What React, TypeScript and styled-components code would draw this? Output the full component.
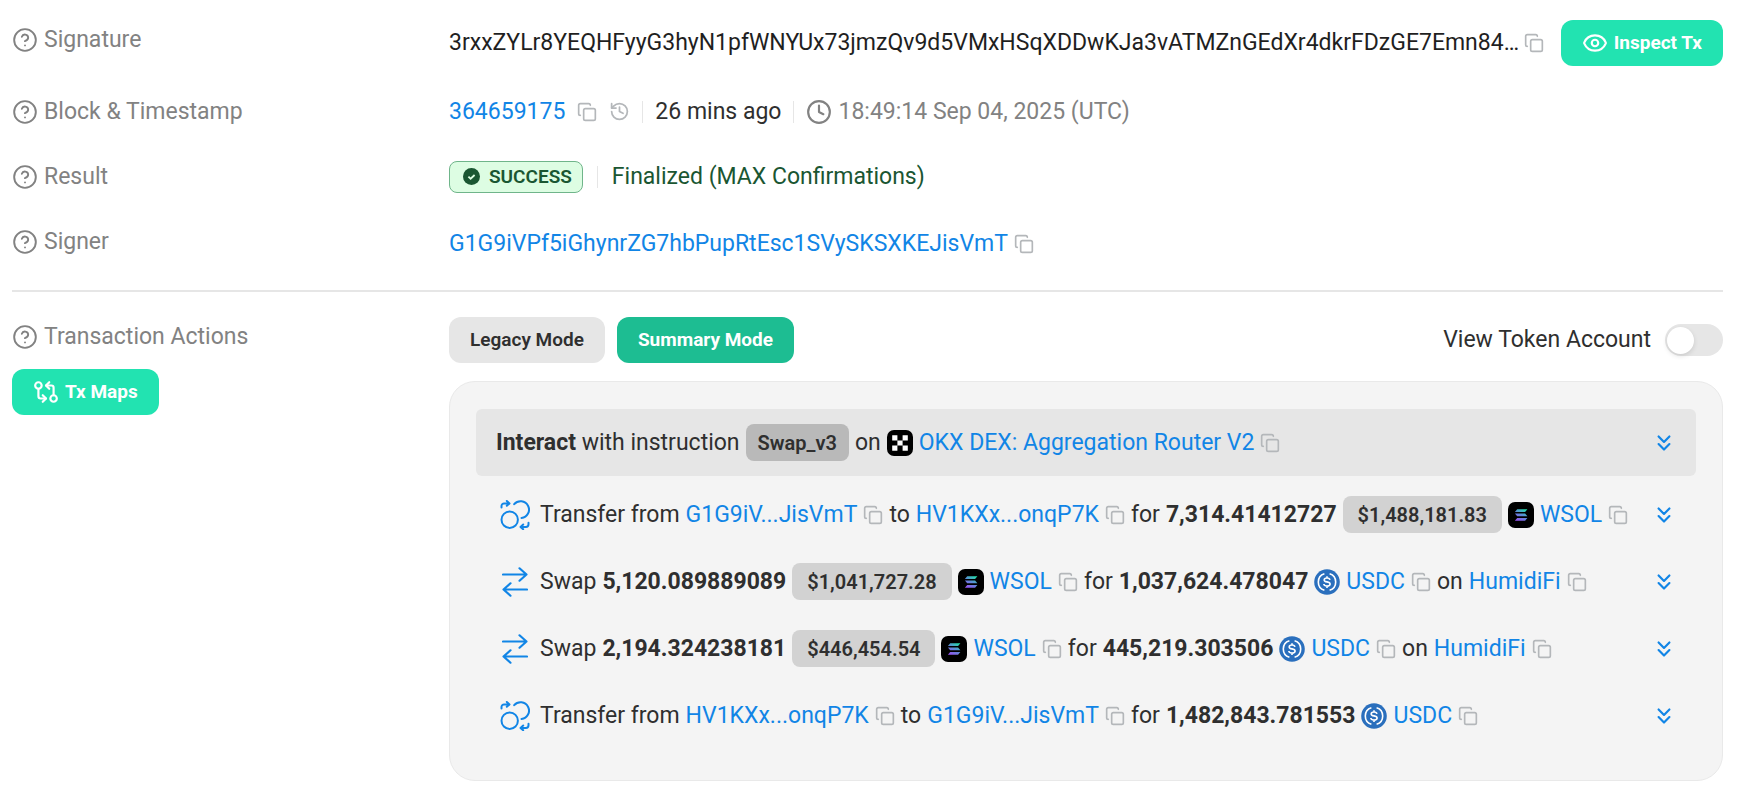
import React from "react";
import styled, { createGlobalStyle } from "styled-components";
import {
  ChevronsDown,
  CircleHelp,
  Clock,
  Copy,
  Eye,
  GitCompareArrows,
  History,
} from "lucide-react";

const color = {
  text: "#2f2f2f",
  muted: "#828282",
  link: "#1185e6",
  faint: "#b4b7ba",
  line: "#e6e6e6",
  mint: "#22e3b1",
  green: "#1dbd92",
  success: "#1a5632",
};

const GlobalStyle = createGlobalStyle`
  * { box-sizing: border-box; }
  body {
    margin: 0;
    background: #ffffff;
    color: ${color.text};
    font-family: Roboto, "Liberation Sans", sans-serif;
    font-size: 23px;
    line-height: 30px;
  }
  button, input { font: inherit; }
  svg { flex: none; display: block; }
`;

const Page = styled.main`
  padding: 20px 21px 20px 12px;
`;

const Fields = styled.dl`
  margin: 0;
  padding-bottom: 16px;
  border-bottom: 2px solid ${color.line};
`;

const Field = styled.div<{ $top?: boolean }>`
  display: grid;
  grid-template-columns: 437px minmax(0, 1fr);
  align-items: ${(p) => (p.$top ? "start" : "center")};
  min-height: ${(p) => (p.$top ? 59 : 65)}px;
`;

const Label = styled.dt`
  display: flex;
  align-items: center;
  gap: 6px;
  height: 40px;
  color: ${color.muted};
`;

const Value = styled.dd<{ $gap?: number }>`
  display: flex;
  align-items: center;
  gap: ${(p) => p.$gap ?? 14}px;
  margin: 0;
  min-width: 0;
`;

const AddressLine = styled.div`
  display: flex;
  align-items: center;
  gap: 6px;
  padding-top: 4px;
`;

const HashLine = styled.div`
  display: flex;
  align-items: center;
  justify-content: space-between;
  gap: 2px;
  flex: 1;
  min-width: 0;
`;

const Hash = styled.span`
  min-width: 0;
  overflow: hidden;
  white-space: nowrap;
  text-overflow: ellipsis;
  color: #1f1f1f;
`;

const Link = styled.a`
  color: ${color.link};
  text-decoration: none;
  white-space: nowrap;
`;

const IconButton = styled.button<{ $tone?: string }>`
  display: flex;
  padding: 0;
  border: 0;
  background: none;
  color: ${(p) => p.$tone ?? color.faint};
  cursor: pointer;
`;

const Separator = styled.span`
  width: 1px;
  height: 22px;
  background: ${color.line};
`;

const Muted = styled.span`
  display: flex;
  align-items: center;
  gap: 6px;
  color: ${color.muted};
`;

const Finalized = styled.span`
  color: ${color.success};
`;

const Status = styled.span`
  display: flex;
  align-items: center;
  gap: 9px;
  height: 32px;
  padding: 0 10px 0 13px;
  border: 1px solid #6fb58a;
  border-radius: 8px;
  background: #ddfde3;
  color: ${color.success};
  font-size: 19px;
  font-weight: 600;
`;

const Button = styled.button<{ $tone?: "mint" | "green" | "grey" }>`
  display: flex;
  align-items: center;
  gap: 6px;
  height: 46px;
  padding: 0 21px;
  border: 0;
  border-radius: 12px;
  background: ${(p) =>
    p.$tone === "grey" ? color.line : p.$tone === "green" ? color.green : color.mint};
  color: ${(p) => (p.$tone === "grey" ? color.text : "#ffffff")};
  font-size: 19px;
  font-weight: ${(p) => (p.$tone === "grey" ? 600 : 700)};
  white-space: nowrap;
  cursor: pointer;
`;

const Actions = styled.section`
  display: grid;
  grid-template-columns: 437px minmax(0, 1fr);
  padding-top: 25px;
`;

const Side = styled.div`
  display: flex;
  flex-direction: column;
  align-items: flex-start;
  gap: 12px;
`;

const SideLabel = styled(Label).attrs({ as: "h2" })`
  margin: 0;
  font-size: 23px;
  font-weight: 400;
`;

const Toolbar = styled.div`
  display: flex;
  align-items: center;
  gap: 12px;
`;

const SwitchLabel = styled.label`
  display: flex;
  align-items: center;
  gap: 14px;
  margin-left: auto;
`;

const Switch = styled.input`
  appearance: none;
  display: flex;
  align-items: center;
  width: 58px;
  height: 32px;
  margin: 0;
  padding: 0 2px;
  border-radius: 16px;
  background: ${color.line};
  cursor: pointer;

  &::before {
    content: "";
    width: 27px;
    height: 27px;
    border-radius: 50%;
    background: #ffffff;
    box-shadow: 0 2px 5px rgba(0, 0, 0, 0.12);
  }
  &:checked {
    justify-content: flex-end;
    background: ${color.green};
  }
`;

const Panel = styled.div`
  margin-top: 18px;
  padding: 27px 26px 31px;
  border: 1px solid #e9e9e9;
  border-radius: 26px;
  background: #f4f4f4;
`;

const Row = styled.div<{ $head?: boolean }>`
  display: flex;
  align-items: center;
  gap: 6px;
  min-height: 67px;
  padding: 0 19px 0 20px;
  margin-bottom: ${(p) => (p.$head ? 5 : 0)}px;
  border-radius: 6px;
  background: ${(p) => (p.$head ? color.line : "transparent")};
  white-space: nowrap;
`;

const Phrase = styled.span`
  strong { font-weight: 700; }
`;

const Amount = styled.strong`
  font-weight: 700;
`;

const RowIcon = styled.span`
  display: flex;
  justify-content: center;
  width: 38px;
`;

const Tag = styled.span<{ $dark?: boolean }>`
  display: flex;
  align-items: center;
  height: 37px;
  padding: 0 ${(p) => (p.$dark ? 12 : 15)}px;
  border-radius: 8px;
  background: ${(p) => (p.$dark ? "#b9b9b9" : "#d2d2d2")};
  font-size: 20px;
  font-weight: 600;
`;

const Expand = styled(IconButton)`
  margin-left: auto;
`;

const CopyButton = () => (
  <IconButton type="button" aria-label="Copy">
    <Copy size={20} strokeWidth={2} />
  </IconButton>
);

const ExpandButton = () => (
  <Expand type="button" aria-label="Expand" $tone={color.link}>
    <ChevronsDown size={26} strokeWidth={2} />
  </Expand>
);

const HelpIcon = () => <CircleHelp size={26} strokeWidth={1.75} />;

const CheckIcon = () => (
  <svg width="17" height="17" viewBox="0 0 17 17">
    <circle cx="8.5" cy="8.5" r="8.5" fill={color.success} />
    <path d="M5.4 8.6l2.2 2.1 4-3.7" fill="none" stroke="#ddfde3" strokeWidth="1.8" />
  </svg>
);

const TransferIcon = () => (
  <svg width="30" height="30" viewBox="0 0 30 30" fill="none" stroke={color.link} strokeWidth="2" strokeLinecap="round" strokeLinejoin="round">
    <circle cx="9.7" cy="19.7" r="8.2" />
    <path d="M14.2 4.2A8.4 8.4 0 1 1 21.5 18" />
    <path d="M1.5 7.5V6a2.600 2.600 0 0 1 2.600-2.600H9M6.800 1l2.700 2.400-2.700 2.400" />
    <path d="M28.500 22.800v1.500a2.600 2.600 0 0 1-2.600 2.600H21M23.200 24.500l-2.700 2.400 2.700 2.400" />
  </svg>
);

const SwapIcon = () => (
  <svg width="26" height="30" viewBox="0 0 26 30" fill="none" stroke={color.link} strokeWidth="2.2" strokeLinecap="round" strokeLinejoin="round">
    <path d="M1 7.500h23.500M17.500 1.300l7 6.200-7 6.200M25 22.500H1.500M8.500 16.300l-7 6.200 7 6.200" />
  </svg>
);

const OkxLogo = () => (
  <svg width="26" height="26" viewBox="0 0 26 26">
    <rect width="26" height="26" rx="7" fill="#000" />
    <path fill="#fff" d="M5.200 5.200h5.200v5.200H5.200zM15.600 5.200h5.200v5.200h-5.200zM10.400 10.400h5.200v5.200h-5.200zM5.200 15.600h5.200v5.200H5.200zM15.600 15.600h5.200v5.200h-5.200z" />
  </svg>
);

const SolLogo = () => (
  <svg width="26" height="26" viewBox="0 0 26 26">
    <defs>
      <linearGradient id="sol" x1="18" y1="6" x2="9" y2="20" gradientUnits="userSpaceOnUse">
        <stop offset="0" stopColor="#19f0a0" />
        <stop offset="0.5" stopColor="#5c8ad6" />
        <stop offset="1" stopColor="#a04bf5" />
      </linearGradient>
    </defs>
    <rect width="26" height="26" rx="7" fill="#000" />
    <path fill="url(#sol)" d="M9.200 7.200h10.200l-2.300 2.700H6.900zM6.900 11.600h10.200l2.300 2.700H9.200zM9.200 16h10.200l-2.300 2.700H6.900z" />
  </svg>
);

const UsdcLogo = () => (
  <svg width="26" height="26" viewBox="0 0 26 26" fill="none" stroke="#fff" strokeWidth="1.600">
    <circle cx="13" cy="13" r="12.800" fill="#2a6fbd" stroke="none" />
    <path d="M10.400 4.700a8.700 8.700 0 0 0 0 16.600M15.600 4.700a8.700 8.700 0 0 1 0 16.600" />
    <path d="M15.900 10.900c-.2-1.300-1.300-1.900-2.900-1.900s-2.800.7-2.800 1.900c0 1.300 1.100 1.700 2.800 2 1.800.3 3.100.8 3.100 2.200 0 1.300-1.200 2-3.100 2s-3-.7-3.200-2.100M13 7.200V9M13 17.100v1.800" />
  </svg>
);

type Token = "WSOL" | "USDC";

const TokenLink = ({ name }: { name: Token }) => (
  <>
    {name === "WSOL" ? <SolLogo /> : <UsdcLogo />}
    <Link href="#">{name}</Link>
    <CopyButton />
  </>
);

type TransferProps = { from: string; to: string; amount: string; usd?: string; token: Token };

const TransferRow = ({ from, to, amount, usd, token }: TransferProps) => (
  <Row>
    <RowIcon><TransferIcon /></RowIcon>
    <span>Transfer from</span>
    <Link href="#">{from}</Link>
    <CopyButton />
    <span>to</span>
    <Link href="#">{to}</Link>
    <CopyButton />
    <span>for</span>
    <Amount>{amount}</Amount>
    {usd && <Tag>{usd}</Tag>}
    <TokenLink name={token} />
    <ExpandButton />
  </Row>
);

type SwapProps = { sold: string; usd: string; bought: string };

const SwapRow = ({ sold, usd, bought }: SwapProps) => (
  <Row>
    <RowIcon><SwapIcon /></RowIcon>
    <span>Swap</span>
    <Amount>{sold}</Amount>
    <Tag>{usd}</Tag>
    <TokenLink name="WSOL" />
    <span>for</span>
    <Amount>{bought}</Amount>
    <TokenLink name="USDC" />
    <span>on</span>
    <Link href="#">HumidiFi</Link>
    <CopyButton />
    <ExpandButton />
  </Row>
);

export default function App() {
  return (
    <>
      <GlobalStyle />
      <Page>
        <Fields>
          <Field $top>
            <Label><HelpIcon />Signature</Label>
            <Value $gap={17}>
              <HashLine>
                <Hash>3rxxZYLr8YEQHFyyG3hyN1pfWNYUx73jmzQv9d5VMxHSqXDDwKJa3vATMZnGEdXr4dkrFDzGE7Emn84…</Hash>
                <CopyButton />
              </HashLine>
              <Button type="button"><Eye size={26} />Inspect Tx</Button>
            </Value>
          </Field>
          <Field>
            <Label><HelpIcon />Block &amp; Timestamp</Label>
            <Value $gap={12}>
              <Link href="#">364659175</Link>
              <CopyButton />
              <IconButton type="button" aria-label="History"><History size={21} /></IconButton>
              <Separator />
              <span>26 mins ago</span>
              <Separator />
              <Muted><Clock size={26} />18:49:14 Sep 04, 2025 (UTC)</Muted>
            </Value>
          </Field>
          <Field>
            <Label><HelpIcon />Result</Label>
            <Value>
              <Status><CheckIcon />SUCCESS</Status>
              <Separator />
              <Finalized>Finalized (MAX Confirmations)</Finalized>
            </Value>
          </Field>
          <Field>
            <Label><HelpIcon />Signer</Label>
            <Value>
              <AddressLine>
                <Link href="#">G1G9iVPf5iGhynrZG7hbPupRtEsc1SVySKSXKEJisVmT</Link>
                <CopyButton />
              </AddressLine>
            </Value>
          </Field>
        </Fields>

        <Actions>
          <Side>
            <SideLabel><HelpIcon />Transaction Actions</SideLabel>
            <Button type="button"><GitCompareArrows size={26} />Tx Maps</Button>
          </Side>
          <div>
            <Toolbar>
              <Button type="button" $tone="grey">Legacy Mode</Button>
              <Button type="button" $tone="green">Summary Mode</Button>
              <SwitchLabel>
                View Token Account
                <Switch type="checkbox" />
              </SwitchLabel>
            </Toolbar>
            <Panel>
              <Row $head>
                <Phrase><strong>Interact</strong> with instruction</Phrase>
                <Tag $dark>Swap_v3</Tag>
                <span>on</span>
                <OkxLogo />
                <Link href="#">OKX DEX: Aggregation Router V2</Link>
                <CopyButton />
                <ExpandButton />
              </Row>
              <TransferRow from="G1G9iV...JisVmT" to="HV1KXx...onqP7K" amount="7,314.41412727" usd="$1,488,181.83" token="WSOL" />
              <SwapRow sold="5,120.089889089" usd="$1,041,727.28" bought="1,037,624.478047" />
              <SwapRow sold="2,194.324238181" usd="$446,454.54" bought="445,219.303506" />
              <TransferRow from="HV1KXx...onqP7K" to="G1G9iV...JisVmT" amount="1,482,843.781553" token="USDC" />
            </Panel>
          </div>
        </Actions>
      </Page>
    </>
  );
}
